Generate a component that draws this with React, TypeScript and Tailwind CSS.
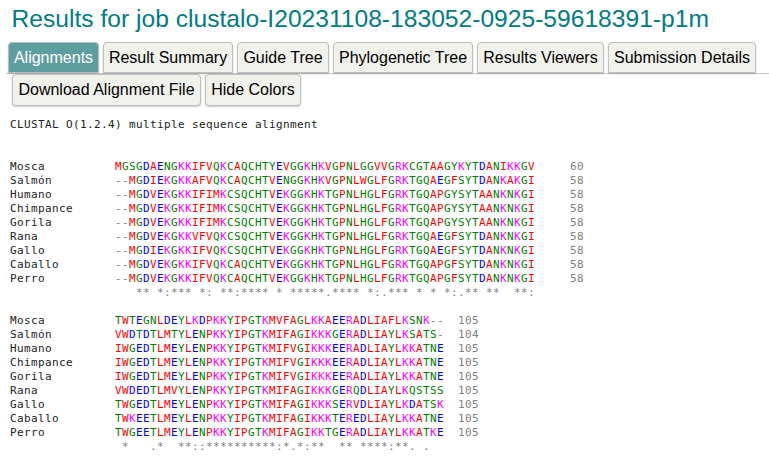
const tabs = [
  { label: 'Alignments', style: 'w-[91px] border-[#b9bfbe] bg-[#5f9ea0] text-white' },
  { label: 'Result Summary', style: 'w-[130px] border-[#bfbfbf] bg-[#f1f2ec] text-black' },
  { label: 'Guide Tree', style: 'w-[92px] border-[#bfbfbf] bg-[#f1f2ec] text-black' },
  { label: 'Phylogenetic Tree', style: 'w-[140px] border-[#bfbfbf] bg-[#f1f2ec] text-black' },
  { label: 'Results Viewers', style: 'w-[127px] border-[#bfbfbf] bg-[#f1f2ec] text-black' },
  { label: 'Submission Details', style: 'w-[148px] border-[#bfbfbf] bg-[#f1f2ec] text-black' },
];

type Row = [string, string, number];

const first: Row[] = [
  ['Mosca', 'MGSGDAENGKKIFVQKCAQCHTYEVGGKHKVGPNLGGVVGRKCGTAAGYKYTDANIKKGV', 60],
  ['Salmón', '--MGDIEKGKKAFVQKCAQCHTVENGGKHKVGPNLWGLFGRKTGQAEGFSYTDANKAKGI', 58],
  ['Humano', '--MGDVEKGKKIFIMKCSQCHTVEKGGKHKTGPNLHGLFGRKTGQAPGYSYTAANKNKGI', 58],
  ['Chimpance', '--MGDVEKGKKIFIMKCSQCHTVEKGGKHKTGPNLHGLFGRKTGQAPGYSYTAANKNKGI', 58],
  ['Gorila', '--MGDVEKGKKIFIMKCSQCHTVEKGGKHKTGPNLHGLFGRKTGQAPGYSYTAANKNKGI', 58],
  ['Rana', '--MGDVEKGKKVFVQKCSQCHTVEKGGKHKTGPNLHGLFGRKTGQAEGFSYTDANKNKGI', 58],
  ['Gallo', '--MGDIEKGKKIFVQKCSQCHTVEKGGKHKTGPNLHGLFGRKTGQAEGFSYTDANKNKGI', 58],
  ['Caballo', '--MGDVEKGKKIFVQKCAQCHTVEKGGKHKTGPNLHGLFGRKTGQAPGFSYTDANKNKGI', 58],
  ['Perro', '--MGDVEKGKKIFVQKCAQCHTVEKGGKHKTGPNLHGLFGRKTGQAPGFSYTDANKNKGI', 58],
];

const second: Row[] = [
  ['Mosca', 'TWTEGNLDEYLKDPKKYIPGTKMVFAGLKKAEERADLIAFLKSNK--', 105],
  ['Salmón', 'VWDTDTLMTYLENPKKYIPGTKMIFAGIKKKGERADLIAYLKSATS-', 104],
  ['Humano', 'IWGEDTLMEYLENPKKYIPGTKMIFVGIKKKEERADLIAYLKKATNE', 105],
  ['Chimpance', 'IWGEDTLMEYLENPKKYIPGTKMIFVGIKKKEERADLIAYLKKATNE', 105],
  ['Gorila', 'IWGEDTLMEYLENPKKYIPGTKMIFVGIKKKEERADLIAYLKKATNE', 105],
  ['Rana', 'VWDEDTLMVYLENPKKYIPGTKMIFAGIKKKGERQDLIAYLKQSTSS', 105],
  ['Gallo', 'TWGEDTLMEYLENPKKYIPGTKMIFAGIKKKSERVDLIAYLKDATSK', 105],
  ['Caballo', 'TWKEETLMEYLENPKKYIPGTKMIFAGIKKKTEREDLIAYLKKATNE', 105],
  ['Perro', 'TWGEETLMEYLENPKKYIPGTKMIFAGIKKTGERADLIAYLKKATKE', 105],
];

function residueColor(residue: string) {
  if ('AVFPMILW'.includes(residue)) return 'text-[#ff0000]';
  if ('DE'.includes(residue)) return 'text-[#0000ff]';
  if ('RK'.includes(residue)) return 'text-[#ff00ff]';
  if (residue === '-') return 'text-[#808080]';
  return 'text-[#008000]';
}

function Block({ rows, marks, gap }: { rows: Row[]; marks: string; gap: string }) {
  return (
    <div className="text-[#808080]">
      {rows.map(([name, sequence, end]) => (
        <div key={name} className="flex h-[14px]">
          <span className="w-[105px] text-[#222222]">{name}</span>
          <span>
            {[...sequence].map((residue, i) => (
              <span key={i} className={residueColor(residue)}>{residue}</span>
            ))}
          </span>
          <span className={gap}>{end}</span>
        </div>
      ))}
      <div className="h-[14px] pl-[105px]">{marks}</div>
    </div>
  );
}

export default function App() {
  return (
    <main className="h-[456px] w-[769px] overflow-hidden bg-white font-['Liberation_Sans',Arial,sans-serif]">
      <h1 className="h-[42px] whitespace-nowrap pl-[11.5px] pt-[4px] text-[24.6px] leading-[30px] tracking-[0.01px] text-[#007c82]">
        Results for job clustalo-I20231108-183052-0925-59618391-p1m
      </h1>
      <nav className="ml-[6px] flex h-[32px] gap-[4px] border-b border-[#c8c8c8] pl-[2px]">
        {tabs.map(({ label, style }) => (
          <button
            key={label}
            className={`flex h-[31px] items-center justify-center whitespace-nowrap rounded-t-[4px] border text-[16px] leading-[20px] shadow-[0_1px_2px_rgba(0,0,0,0.18)] ${style}`}
          >
            {label}
          </button>
        ))}
      </nav>
      <div className="flex gap-[4px] pl-[12px] text-[16px] leading-[20px] text-black">
        <button className="h-[32px] w-[189px] whitespace-nowrap rounded-[4px] border border-[#bfbfbf] bg-[#f1f2ec] shadow-[0_1px_2px_rgba(0,0,0,0.22)]">
          Download Alignment File
        </button>
        <button className="h-[32px] w-[96px] whitespace-nowrap rounded-[4px] border border-[#bfbfbf] bg-[#f1f2ec] shadow-[0_1px_2px_rgba(0,0,0,0.22)]">
          Hide Colors
        </button>
      </div>
      <section className="whitespace-pre pl-[10px] pt-[12px] font-['DejaVu_Sans_Mono',monospace] text-[11px] leading-[14px] tracking-[0.377px]">
        <div className="mb-[28px] text-[#222222]">CLUSTAL O(1.2.4) multiple sequence alignment</div>
        <Block
          rows={first}
          marks="   ** *:*** *: **:**** * *****.**** *:.*** * * *:.** **  **:"
          gap="pl-[35px]"
        />
        <div className="h-[14px]" />
        <Block
          rows={second}
          marks=" *   .*  **::**********:*.*:**  ** ****:**. ."
          gap="pl-[14px]"
        />
      </section>
    </main>
  );
}
